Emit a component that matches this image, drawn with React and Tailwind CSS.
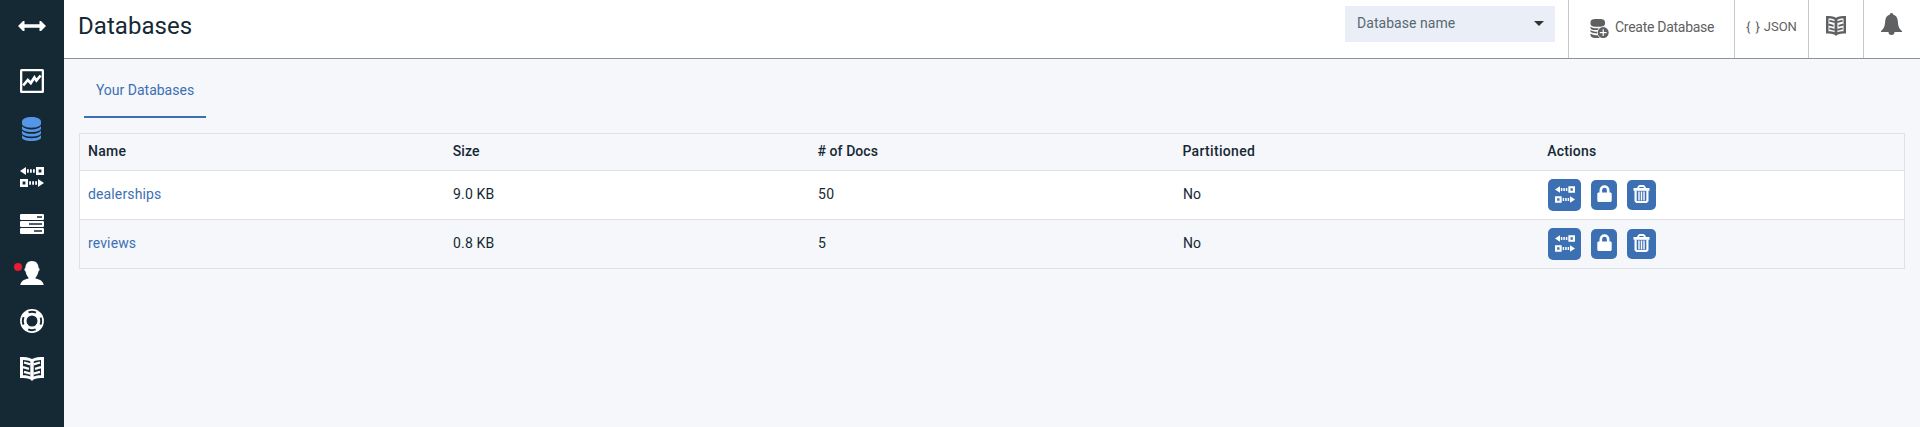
function Svg({ w, h, vb, className = '', children }) {
  return (
    <svg width={w} height={h} viewBox={vb} fill="currentColor" className={'block shrink-0 ' + className}>
      {children}
    </svg>
  )
}

const ArrowsIcon = () => (
  <Svg w={28} h={10} vb="0 0 28 10">
    <path d="M0 5 5 0h1.500v3.200h15V0H23l5 5-5 5h-1.500V6.800h-15V10H5z" />
  </Svg>
)

const ChartIcon = () => (
  <Svg w={24} h={24} vb="0 0 24 24">
    <path fillRule="evenodd" d="M1.500 0h21A1.500 1.500 0 0 1 24 1.500v21a1.500 1.500 0 0 1-1.500 1.500h-21A1.500 1.500 0 0 1 0 22.500v-21A1.500 1.500 0 0 1 1.500 0zM2.300 2.300v19.400h19.400V2.300z" />
    <path d="m3.200 16.500 4.600-5.500 3 3 3.600-5.500 2 3 4.200-5" fill="none" stroke="currentColor" strokeWidth="2.700" />
  </Svg>
)

const DatabaseIcon = () => (
  <Svg w={19} h={24} vb="0 0 19 24" className="mr-px">
    <path d="M0 4.500C0 2 4 0 9.500 0S19 2 19 4.500v2C19 9 15 10.700 9.500 10.700S0 9 0 6.500z" />
    <path d="M0 9.200c1.500 2 5 3.200 9.500 3.200s8-1.200 9.500-3.200v2.300c0 2-4 3.600-9.500 3.600S0 13.500 0 11.500z" />
    <path d="M0 13.700c1.500 2 5 3.100 9.500 3.100s8-1.100 9.500-3.100V16c0 2-4 3.500-9.500 3.500S0 18 0 16z" />
    <path d="M0 18.200c1.500 2 5 3 9.500 3s8-1 9.500-3v2.300c0 2-4 3.500-9.500 3.500S0 22.500 0 20.500z" />
  </Svg>
)

function ReplicationIcon({ w = 24, h = 20, className }) {
  return (
    <Svg w={w} h={h} vb="0 0 24 20" className={className}>
      <path d="M0 4 6 0v8zM7 2.200h1.800v3.600H7zM10 2.200h1.800v3.600H10zM13 2.200h1.800v3.600H13z" />
      <path fillRule="evenodd" d="M16 0h8v8h-8zM18.600 2.600v2.800h2.800V2.600z" />
      <path fillRule="evenodd" d="M0 12h8v8H0zM2.600 14.600v2.800h2.800v-2.800z" />
      <path d="M9.200 14.200H11v3.600H9.200zM12.200 14.200H14v3.600h-1.800zM15.200 14.200H17v3.600h-1.800zM18 12l6 4-6 4z" />
    </Svg>
  )
}

const ServersIcon = () => (
  <Svg w={24} h={20} vb="0 0 24 20" className="mb-0.5">
    <path fillRule="evenodd" d="M.8 0h22.400l.8.800v4.400l-.8.800H.8L0 5.200V.8zM17 2.300v1.400h5V2.300z" />
    <path fillRule="evenodd" d="M.8 7h22.400l.8.800v4.400l-.8.800H.8L0 12.200V7.800zM9 9.300v1.400h13V9.300z" />
    <path fillRule="evenodd" d="M.8 14h22.400l.8.800v4.400l-.8.800H.8l-.8-.8v-4.400zM14 16.200v1.600h8v-1.600z" />
  </Svg>
)

const UserIcon = () => (
  <Svg w={24} h={24} vb="0 0 24 24">
    <path d="M12 0c4.200 0 6.500 2.800 6.700 7.300 1.200 0 1.300 2.500-.3 3.100-.5 2.800-1.700 4.800-2.900 6.300v.8c2 .7 7.500 1.300 8.200 6.500H.3c.7-5.200 6.200-5.800 8.200-6.500v-.8c-1.200-1.500-2.400-3.500-2.900-6.300-1.600-.6-1.500-3.100-.3-3.100C5.500 2.800 7.800 0 12 0z" />
  </Svg>
)

const LifebuoyIcon = () => (
  <Svg w={24} h={24} vb="0 0 24 24">
    <circle cx="12" cy="12" r="8.700" fill="none" stroke="currentColor" strokeWidth="6.400" />
    <circle cx="12" cy="12" r="9.200" fill="none" stroke="#152935" strokeWidth="1.900" strokeDasharray="7.600 6.850" strokeDashoffset="3.800" />
  </Svg>
)

function BookIcon({ size = 24 }) {
  return (
    <Svg w={size} h={size} vb="0 0 24 24">
      <path
        fillRule="evenodd"
        d="M0 0c4.500 0 9 .3 12 2 3-1.700 7.500-2 12-2v21c-4 0-8.500.3-10.500 1.500L12 24l-1.500-1.500C8.500 21.300 4 21 0 21zM3 3v15.300c3 .1 5.300.4 7.300 1.300V4.500C8.500 3.500 6 3.100 3 3zM21 3c-3 .1-5.500.5-7.300 1.500v15.100c2-.9 4.500-1.200 7.300-1.300z"
      />
      <path d="m4 5.500 6.500 1.800M3 10.200l6 1.700M4 14.800l6.500 1.800M20 5.500l-6.500 1.800M21 10.200l-6 1.700M20 14.800l-6.500 1.800" fill="none" stroke="currentColor" strokeWidth="2.300" />
    </Svg>
  )
}

const CreateDatabaseIcon = () => (
  <Svg w={19} h={19} vb="0 0 19 19">
    <path d="M.5 3C.5 1.200 2.500 0 5 0h5.500C13 0 15 1.200 15 3v2c0 1.500-2 2.800-4.500 2.800H5C2.500 7.800.5 6.500.5 5z" />
    <path d="M.5 7.500C2 9 4 9.300 7.500 9.300S13 9 15 7.500v1.800C13 10.800 11 11 7.500 11S2 11 .5 9.400z" />
    <path d="M.5 11c1.500 1.400 3.500 1.700 7 1.700v1.800c-3.500 0-5.500-.4-7-1.700zM.5 14.500c1.500 1.400 3.500 1.700 7.500 1.700l2 2.700H5c-2.500 0-4.500-1-4.500-2.600z" />
    <circle cx="13.200" cy="13.600" r="6.100" fill="#fff" />
    <circle cx="13.200" cy="13.600" r="5.500" />
    <path d="M13.200 10.200V17M9.800 13.600h6.800" stroke="#fff" strokeWidth="1.200" />
  </Svg>
)

const BellIcon = () => (
  <Svg w={21} h={22} vb="0 0 21 22">
    <path d="M10.500 0c1 0 1.500.7 1.600 1.500 3 .8 4.400 3.200 4.700 6.500.4 5 .9 7.300 4.200 10v1H0v-1c3.300-2.700 3.800-5 4.200-10C4.500 4.700 5.900 2.300 8.900 1.500 9 .7 9.500 0 10.500 0z" />
    <path d="M7.500 19h6a3 3 0 0 1-6 0z" />
  </Svg>
)

const LockIcon = () => (
  <Svg w={15} h={17} vb="0 0 15 17" className="mb-[3px]">
    <path d="M3.800 9V5.200a3.700 3.700 0 0 1 7.400 0V9" fill="none" stroke="currentColor" strokeWidth="2.600" />
    <path d="M1.200 7.500h12.600l.9.900v7.700l-.9.900H1.200l-.9-.9V8.400z" />
  </Svg>
)

const TrashIcon = () => (
  <Svg w={17} h={18} vb="0 0 17 18" className="mb-0.5">
    <path d="M5.200 3.500V2.300L6.500 1h4l1.300 1.300v1.200" fill="none" stroke="currentColor" strokeWidth="1.800" />
    <path d="M.5 3h16v2.800H.5z" />
    <path d="M2.600 5.500v10.300l1.200 1.200h9.400l1.200-1.200V5.500" fill="none" stroke="currentColor" strokeWidth="2.200" />
    <path d="M6 6.500v9M8.500 6.500v9M11 6.500v9" fill="none" stroke="currentColor" strokeWidth="1.400" />
  </Svg>
)

const CELL = 'w-[365px] pl-2 pb-0.5'
const ACTION = 'flex items-center justify-center rounded-[5px] bg-[#3d70b2] text-white'

function Row({ name, size, docs, stripe }) {
  return (
    <div className={'flex h-[49px] items-center border-b border-[#dfe1e5] text-sm ' + stripe}>
      <div className={CELL}>
        <a className="tracking-[0.13px] text-[#3d70b2]">{name}</a>
      </div>
      <div className={CELL + ' tracking-[0.16px]'}>{size}</div>
      <div className={CELL + ' tracking-[0.3px]'}>{docs}</div>
      <div className={CELL}>No</div>
      <div className="flex items-center gap-2.5 pl-2">
        <button className={ACTION + ' h-8 w-[33px]'}>
          <ReplicationIcon w={20} h={17} className="mb-0.5" />
        </button>
        <button className={ACTION + ' h-[30px] w-[26px]'}>
          <LockIcon />
        </button>
        <button className={ACTION + ' h-[30px] w-[29px]'}>
          <TrashIcon />
        </button>
      </div>
    </div>
  )
}

const NAV = [ChartIcon, DatabaseIcon, ReplicationIcon, ServersIcon, UserIcon, LifebuoyIcon, BookIcon]

export default function App() {
  return (
    <div className="flex h-[427px] w-[1920px] overflow-hidden bg-[#f5f7fb] font-['Roboto','Liberation_Sans',sans-serif] text-[#152935]">
      <nav className="flex w-16 shrink-0 flex-col bg-[#152935] text-white">
        <div className="flex h-[57px] items-start justify-center pt-[21px]">
          <ArrowsIcon />
        </div>
        {NAV.map((Icon, i) => (
          <div key={i} className={'relative flex h-12 items-center justify-center ' + (i === 1 ? 'text-[#5596e6]' : '')}>
            {Icon === UserIcon && <span className="absolute top-[14px] left-[14px] size-2 rounded-full bg-[#e71d32]" />}
            <Icon />
          </div>
        ))}
      </nav>

      <div className="flex grow flex-col">
        <header className="flex h-[59px] border-b border-[#8f9299] bg-white text-[#5f6062]">
          <h1 className="grow pt-2.5 pl-[14px] text-2xl leading-8 tracking-[0.05px] text-[#152935]">Databases</h1>
          <div className="mt-1.5 mr-[13px] flex h-9 w-[210px] items-center justify-between bg-[#eaeff7] pr-[11px] pl-3 text-sm">
            <span className="pb-0.5 tracking-[0.05px] text-[#5a6872]">Database name</span>
            <Svg w={10} h={5} vb="0 0 10 5" className="-mt-px text-[#333]">
              <path d="M0 0h10L5 5z" />
            </Svg>
          </div>
          <div className="flex w-[166px] items-start border-l border-[#c8c8c8] pt-[19px] pl-[21px]">
            <CreateDatabaseIcon />
            <span className="-mt-[2px] ml-[6px] text-sm tracking-[-0.28px]">Create Database</span>
          </div>
          <div className="flex w-[74px] border-l border-[#c8c8c8] pt-[17px] pl-[11px] text-[13px] leading-5 whitespace-pre">
            <span className="tracking-[0.9px]">{'{ }'}</span>
            <span className="ml-[3px]">JSON</span>
          </div>
          <div className="flex w-[55px] justify-center border-l border-[#c8c8c8] pt-4">
            <BookIcon size={20} />
          </div>
          <div className="flex w-[57px] border-l border-[#c8c8c8] pt-[13px] pl-[17px]">
            <BellIcon />
          </div>
        </header>

        <main className="pr-[15px] pl-[15px]">
          <div className="ml-[5px] flex h-[59px] w-[122px] items-center justify-center border-b-2 border-[#3d70b2] pb-px text-sm text-[#3d70b2]">
            <span className="pt-[5px]">Your Databases</span>
          </div>
          <section className="mt-[15px] w-[1826px] border-x border-t border-[#dfe1e5]">
            <div className="flex h-[37px] items-center border-b border-[#dfe1e5] text-sm font-medium">
              <div className={CELL + ' tracking-[0.25px]'}>Name</div>
              <div className={CELL + ' tracking-[0.1px]'}>Size</div>
              <div className={CELL + ' tracking-[0.05px]'}># of Docs</div>
              <div className={CELL + ' tracking-[0.32px]'}>Partitioned</div>
              <div className={CELL + ' tracking-[0.2px]'}>Actions</div>
            </div>
            <Row name="dealerships" size="9.0 KB" docs="50" stripe="bg-white" />
            <Row name="reviews" size="0.8 KB" docs="5" stripe="bg-[#f5f7fb]" />
          </section>
        </main>
      </div>
    </div>
  )
}
